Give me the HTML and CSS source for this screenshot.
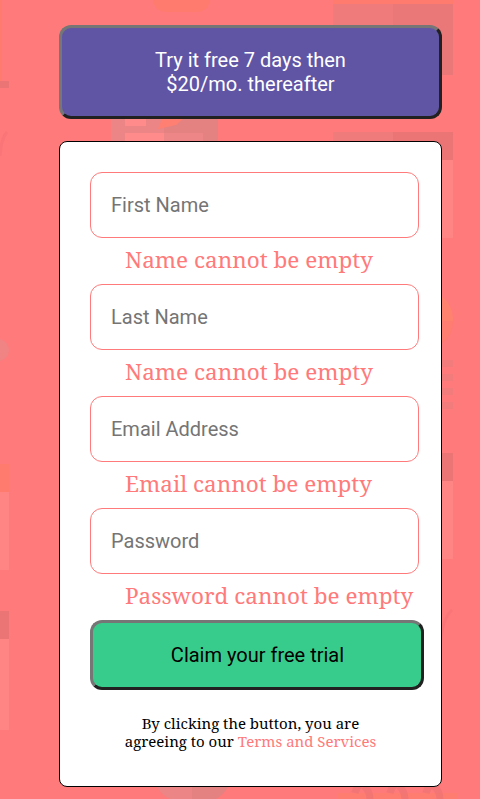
FILE: index.html
```html
<!DOCTYPE html>
<html lang="en">
<head>
<meta charset="utf-8">
<title>Free trial</title>
<link rel="stylesheet" href="styles.css">
</head>
<body>
<svg class="backdrop" viewBox="0 0 480 799" aria-hidden="true">
  <path fill="#ff7b6e" d="M0 0h1.5v81H0zM0 464h9v28H0zM333 0h120v4H333zM153 0h57q-2 12-14 12h-29q-12 0-14-12z"/>
  <path fill="#eb7575" d="M0 81h9v7H0zM0 611h9v28H0zM333 132h120v28H333zM441 453h12v28h-12z"/>
  <path fill="#ff8585" d="M0 492h9v78H0zM0 639h9v91H0zM441 160h12v78h-12zM441 481h12v78h-12z"/>
  <path fill="#ef7b7b" d="M333 4h60v71h-60zM333 132h60v9h-60z"/>
  <path fill="#eb7878" d="M393 4h60v71h-60z"/>
  <path fill="#f08484" d="M0 339q9 3 9 11T0 361z"/>
  <path fill="none" stroke="#f97578" stroke-width="3" d="M7 132Q1 139 0 156M452 610Q443 618 441 640"/>
  <path fill="#ec8585" d="M111 119h53v22h-53zM157 787h35v12h-22q-8-4-13-12z"/>
  <path fill="#e48282" d="M164 119h54v22h-54zM192 787h36q-5 8-12 12h-24z"/>
  <path fill="#ff8b8b" d="M125 119h21v7h-21zM125 133h39v8h-39z"/>
  <path fill="#ed8787" d="M164 133h39v8h-39z"/>
  <path fill="#ff7f72" d="M162 119h21l-7 6-18 4z"/>
  <path fill="#ff7c70" d="M338 793h119v6H338z"/>
  <path fill="#ff826f" d="M441 296q12 8 12 25h-12z"/>
  <path fill="#ff7c70" d="M441 321h12q0 15-12 23z"/>
  <path fill="#f27b7c" d="M441 360h12v7h-12zM441 374h12v7h-12zM441 388h12v7h-12zM441 402h12v7h-12z"/>
  <path fill="none" stroke="#ee7375" stroke-width="7" stroke-opacity=".7" d="M355 793q1-5 5-8M364 786q6 5 6 14M390 793q1-5 5-8M399 786q6 5 6 14M426 793q1-5 5-8M434 786q6 5 6 14"/>
</svg>
<main class="signup">
  <button class="offer" type="button">Try it free 7 days then<br>$20/mo. thereafter</button>
  <form class="card">
    <input class="field" placeholder="First Name"><p class="error">Name cannot be empty</p>
    <input class="field" placeholder="Last Name"><p class="error">Name cannot be empty</p>
    <input class="field" placeholder="Email Address"><p class="error">Email cannot be empty</p>
    <input class="field" type="password" placeholder="Password"><p class="error">Password cannot be empty</p>
    <button class="claim" type="button">Claim your free trial</button>
    <p class="terms">By clicking the button, you are<br>agreeing to our <span class="terms-link">Terms and Services</span></p>
  </form>
</main>
</body>
</html>
```
FILE: styles.css
```css
* { box-sizing: border-box; }
body {
  margin: 0;
  height: 799px;
  overflow: hidden;
  background: #ff7a7a;
  font-family: "Noto Serif", "Droid Serif", "DejaVu Serif", serif;
}
.backdrop {
  position: absolute;
  top: 0;
  left: 0;
  width: 480px;
  height: 799px;
}
.signup {
  position: relative;
  width: 383px;
  margin-left: 59px;
  padding-top: 25px;
}
.offer, .claim {
  display: block;
  padding: 0;
  border: 3px solid;
  border-color: #767676 #212121 #212121 #767676;
  border-radius: 12px;
  font: 20px/24px Roboto, sans-serif;
}
.offer {
  width: 383px;
  height: 94px;
  margin-bottom: 22px;
  background: #6055a5;
  color: #fff;
}
.card {
  height: 646px;
  padding: 30px 0 0 30px;
  border: 1px solid #000;
  border-radius: 8px;
  background: #fff;
}
.field {
  display: block;
  width: 329px;
  height: 66px;
  padding: 0 20px;
  border: 1px solid #ff7a7a;
  border-radius: 12px;
  background: #fff;
  font: 20px Roboto, sans-serif;
}
.field::placeholder { color: #757575; }
.error {
  height: 46px;
  margin: 0 0 0 35px;
  color: #ff7a7a;
  font-size: 22.5px;
  line-height: 44px;
  white-space: nowrap;
}
.claim {
  width: 334px;
  height: 70px;
  padding-left: 1px;
  background: #38cc8c;
  color: #000;
}
.terms {
  width: 321px;
  margin: 24px 0 0;
  text-align: center;
  font-size: 15px;
  line-height: 18px;
  white-space: nowrap;
}
.terms-link { color: #ff7a7a; }
```
